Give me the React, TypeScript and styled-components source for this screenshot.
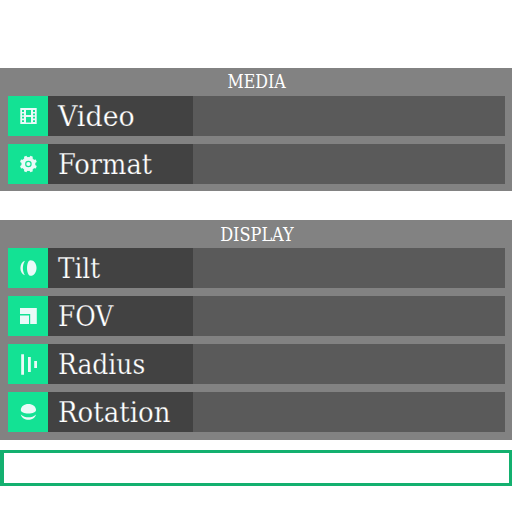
import React from "react";
import styled, { createGlobalStyle } from "styled-components";

const GlobalStyle = createGlobalStyle`
  * { box-sizing: border-box; }
  body { margin: 0; background: #fff; }
`;

const Page = styled.main`
  width: 512px;
  height: 512px;
  padding-top: 68px;
  display: flex;
  flex-direction: column;
  overflow: hidden;
  font-family: "DejaVu Serif Condensed", "DejaVu Serif", serif;
  font-stretch: condensed;
`;

const Panel = styled.section<{ $gap: number }>`
  background: #828282;
  padding: 0 7px 0 8px;
  margin-bottom: ${(p) => p.$gap}px;
`;

const Title = styled.h2<{ $line: number }>`
  margin: 0;
  height: 28px;
  line-height: ${(p) => p.$line}px;
  display: flex;
  justify-content: center;
  font-size: 18.5px;
  font-weight: 400;
  color: #fff;
`;

const Rows = styled.div<{ $end: number }>`
  display: flex;
  flex-direction: column;
  gap: 8px;
  padding-bottom: ${(p) => p.$end}px;
`;

const Row = styled.div`
  display: grid;
  grid-template-columns: 40px 145px 1fr;
  height: 40px;
  background: #5a5a5a;
`;

const IconTile = styled.div`
  background: #13e294;
  svg { display: block; }
`;

const Label = styled.div`
  background: #424242;
  padding-left: 10px;
  line-height: 40px;
  font-size: 27.5px;
  color: #fff;
  -webkit-text-stroke: 0.25px #424242;
`;

const Fit = styled.span<{ $scale: number; $origin?: string }>`
  display: inline-block;
  white-space: nowrap;
  transform: scaleX(${(p) => p.$scale});
  transform-origin: ${(p) => p.$origin ?? "left"} center;
`;

const Field = styled.input`
  width: 512px;
  height: 36px;
  border: 3px solid #13b06f;
  border-left-width: 4px;
  border-radius: 0;
  background: #fff;
  outline: none;
`;

const Icon = ({ children }: { children: React.ReactNode }) => (
  <svg width="40" height="40" viewBox="0 0 40 40" fill="#eafaf8">{children}</svg>
);

const FilmIcon = () => (
  <Icon>
    <path fillRule="evenodd" d="M12.3 12H28.7V28H12.3Z M18 14V19H23V14Z M18 21V26.5H23V21Z M14 14V16H16V14Z M14 17.4V19.2H16V17.4Z M14 20.8V22.6H16V20.8Z M14 24.2V26H16V24.2Z M25 14V16H27V14Z M25 17.4V19.2H27V17.4Z M25 20.8V22.6H27V20.8Z M25 24.2V26H27V24.2Z" />
  </Icon>
);

const teeth = [22.5, 67.5, 112.5, 157.5, 202.5, 247.5, 292.5, 337.5];

const GearIcon = () => (
  <Icon>
    <circle cx="20.4" cy="20" r="7" />
    {teeth.map((angle) => (
      <path key={angle} d="M18.6 14L19.1 11.5H21.7L22.2 14Z" transform={`rotate(${angle} 20.4 20)`} />
    ))}
    <circle cx="20.4" cy="20" r="2.7" fill="none" stroke="#13e294" strokeWidth="1.2" />
  </Icon>
);
const TiltIcon = () => (
  <Icon>
    <path d="M22.6 12.2C26 12.2 28.5 15.7 28.5 20C28.5 24.3 26 27.8 22.6 27.8C20.4 27.8 19 24.3 19 20C19 15.7 20.4 12.2 22.6 12.2Z" />
    <path d="M17 12.7C10.9 14.6 10.9 25.4 17 27.3C14.2 23 14.2 17 17 12.7Z" />
  </Icon>
);
const FovIcon = () => (
  <Icon><path d="M12 12H28.8V28H22.2V18H12Z M12 19.5H21V28H12Z" /></Icon>
);
const RadiusIcon = () => (
  <Icon><path d="M13.2 10.3H16V30.7H13.2Z M20 13H22.8V28H20Z M26.2 17H29V24H26.2Z" /></Icon>
);
const RotationIcon = () => (
  <Icon>
    <path d="M12.8 18C12.8 14.6 16.1 12 20.4 12C24.7 12 28 14.6 28 18C28 20.2 24.7 21.5 20.4 21.5C16.1 21.5 12.8 20.2 12.8 18Z" />
    <path d="M12.8 22.4C14.5 29.4 26.3 29.4 28 22.4C24 26.2 17 26.2 12.8 22.4Z" />
  </Icon>
);

type Item = { label: string; scale: number; icon: React.ReactNode };

const media: Item[] = [
  { label: "Video", scale: 1.085, icon: <FilmIcon /> },
  { label: "Format", scale: 1.04, icon: <GearIcon /> },
];
const display: Item[] = [
  { label: "Tilt", scale: 0.995, icon: <TiltIcon /> },
  { label: "FOV", scale: 1.01, icon: <FovIcon /> },
  { label: "Radius", scale: 1.01, icon: <RadiusIcon /> },
  { label: "Rotation", scale: 1.052, icon: <RotationIcon /> },
];

const SettingRows = ({ items, end }: { items: Item[]; end: number }) => (
  <Rows $end={end}>
    {items.map((item) => (
      <Row key={item.label}>
        <IconTile>{item.icon}</IconTile>
        <Label><Fit $scale={item.scale}>{item.label}</Fit></Label>
      </Row>
    ))}
  </Rows>
);

export default function App() {
  return (
    <>
      <GlobalStyle />
      <Page>
        <Panel $gap={29}>
          <Title $line={28}><Fit $scale={0.95} $origin="center">MEDIA</Fit></Title>
          <SettingRows items={media} end={7} />
        </Panel>
        <Panel $gap={10}>
          <Title $line={30}><Fit $scale={0.97} $origin="center">DISPLAY</Fit></Title>
          <SettingRows items={display} end={8} />
        </Panel>
        <Field aria-label="Value" />
      </Page>
    </>
  );
}
